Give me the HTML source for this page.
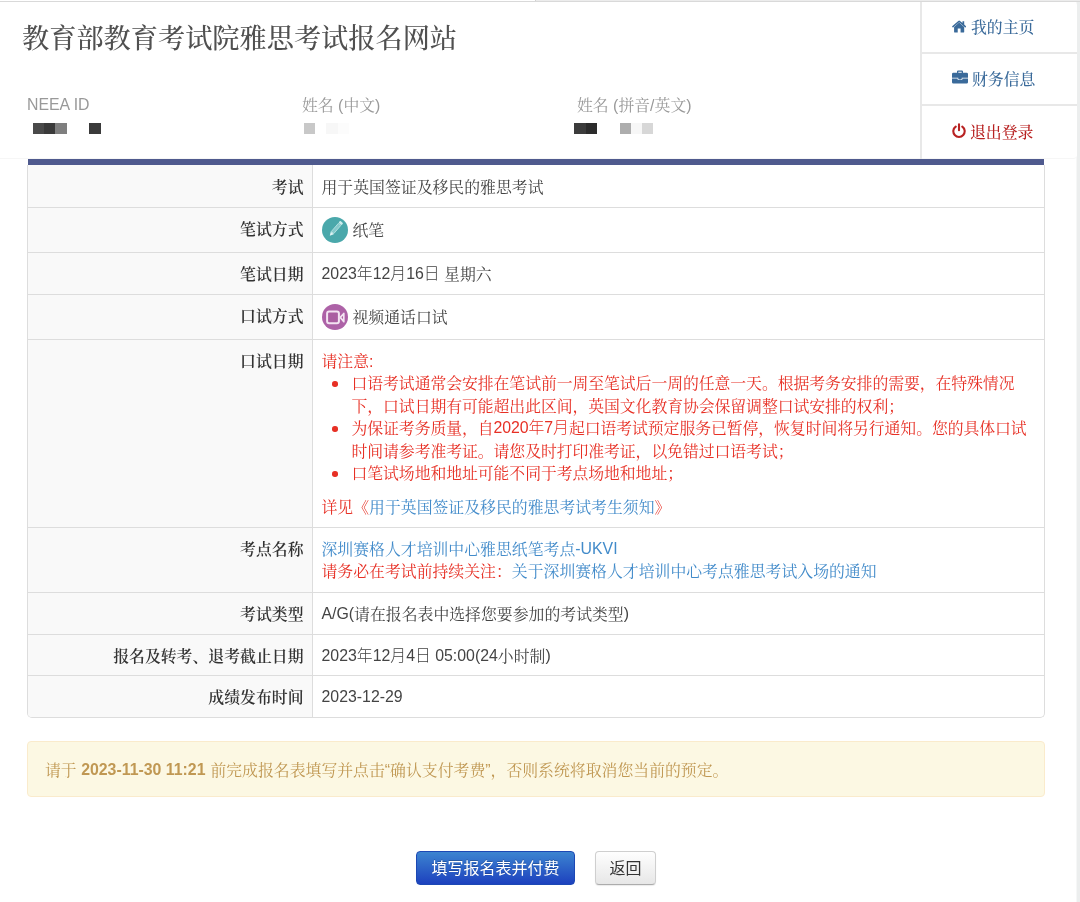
<!DOCTYPE html>
<html lang="zh-CN">
<head>
<meta charset="utf-8">
<title>教育部教育考试院雅思考试报名网站</title>
<style>
*{box-sizing:border-box;}
html,body{margin:0;padding:0;}
body{width:1080px;height:902px;overflow:hidden;background:#fff;position:relative;
  font-family:"Liberation Sans","Noto Serif CJK SC",serif;font-size:15.86px;line-height:22.5px;color:#333;font-weight:400;}
a{color:#428bca;text-decoration:none;}
.strip{position:absolute;left:1076px;top:0;width:4px;height:902px;background:#eceeee;border-left:1px solid #f6f7f7;}
.top0{position:absolute;left:535px;top:0;width:545px;height:1px;background:#ececec;border-left:1px solid #d2d2d2;}
.topline{position:absolute;left:0;top:1px;width:1080px;height:1px;background:#d9d9d9;}
/* header */
.hdr{position:absolute;left:0;top:2px;width:1077px;height:157px;background:#fff;border-bottom:1px solid #f6f6f6;border-radius:0 4px 4px 0;}
.title{position:absolute;left:22px;top:17px;margin:0;font-size:27.19px;line-height:40px;font-weight:500;color:#505050;white-space:nowrap;}
.fld{position:absolute;top:92px;font-size:15.86px;line-height:22.5px;color:#999;white-space:nowrap;}
.blk{position:absolute;top:121px;height:11.3px;width:11.4px;}
.menu{position:absolute;left:920px;top:0;width:157px;height:157px;border-left:2px solid #e8e8e8;}
.mi{position:absolute;left:-1px;width:156px;height:52px;border-top:2px solid #e8e8e8;color:#3a6a9a;white-space:nowrap;}
.mi svg{position:absolute;}
.mi span{position:absolute;left:51px;top:14px;line-height:22.5px;font-weight:500;}
.mi.red{color:#b82222;}
/* table */
.bar{position:absolute;left:28px;top:159px;width:1016px;height:6px;background:#4f5a8e;}
.tw{position:absolute;left:27px;top:165px;width:1018px;height:553px;border:1px solid #ddd;border-top:none;border-radius:0 0 5px 5px;overflow:hidden;background:#fff;}
table.t{position:absolute;left:0;top:0;width:1016px;border-collapse:collapse;table-layout:fixed;border-style:hidden;}
table.t td{border:1px solid #ddd;padding:11px 9px 7px 9px;vertical-align:top;}
table.t td.l{width:284px;background:#f9f9f9;text-align:right;font-weight:600;color:#333;padding-right:8px;}
table.t td.v{color:#444;}
.ic{display:inline-block;width:26px;height:26px;vertical-align:middle;margin-right:5px;position:relative;top:-2px;}
.red,table.t td.red{color:#e73025;}
ul.n{margin:0 0 11.25px 0;padding:0 0 0 30px;list-style:none;letter-spacing:-0.075px;}
ul.n li{position:relative;}
ul.n li:before{content:"";position:absolute;left:-19.4px;top:8.4px;width:5.6px;height:5.6px;border-radius:50%;background:#e73025;}
p{margin:0;}
.e{position:relative;top:-1px;}
.s{font-family:"Liberation Sans","Noto Sans CJK SC",sans-serif;font-weight:300;font-style:normal;}
.alert{position:absolute;left:27px;top:741px;width:1018px;height:56px;background:#fcf8e3;border:1px solid #faebcc;border-radius:4px;color:#c09853;padding:18px 17px 0 17px;white-space:nowrap;}
.alert b{position:relative;top:-1px;margin-right:0.5px;}
.btn{position:absolute;top:851px;height:34px;border-radius:4px;font-family:"Liberation Sans","Noto Sans CJK SC",sans-serif;font-size:16px;line-height:34px;text-align:center;white-space:nowrap;}
.bp{left:416px;width:159px;background:linear-gradient(#3c84d0,#1d41be);border:1px solid #1c48b4;color:#fff;text-shadow:0 -1px 0 rgba(0,0,0,.2);}
.bd{left:595px;width:61px;background:linear-gradient(#fefefe,#e7e7e7);border:1px solid #cfcfcf;border-bottom-color:#acacac;box-shadow:0 1px 1px rgba(0,0,0,.08);color:#333;}
</style>
</head>
<body>
<div id="w" style="position:absolute;left:0;top:0;width:1080px;height:902px;will-change:transform">
<div class="strip"></div>
<div class="top0"></div>
<div class="topline"></div>
<div class="hdr">
  <h1 class="title">教育部教育考试院雅思考试报名网站</h1>
  <div class="fld" style="left:27px">NEEA ID</div>
  <div class="fld" style="left:302px;top:93px">姓名 (中文)</div>
  <div class="fld" style="left:577px;top:93px">姓名 (拼音/英文)</div>
  <div class="blk" style="left:32.800px;background:#4a4a4a"></div>
  <div class="blk" style="left:44.100px;background:#3a3a3a"></div>
  <div class="blk" style="left:55.400px;background:#7f7f7f"></div>
  <div class="blk" style="left:89.200px;background:#3a3a3a"></div>
  <div class="blk" style="left:303.700px;background:#c8c8c8"></div>
  <div class="blk" style="left:326.200px;background:#f7f7f7"></div>
  <div class="blk" style="left:337.500px;background:#fcfcfc"></div>
  <div class="blk" style="left:574.200px;background:#3c3c3c"></div>
  <div class="blk" style="left:585.500px;background:#2c2c2c"></div>
  <div class="blk" style="left:619.500px;background:#adadad"></div>
  <div class="blk" style="left:630.800px;background:#f7f7f7"></div>
  <div class="blk" style="left:642.100px;background:#d7d7d7"></div>
  <div class="menu">
    <div class="mi" style="top:-1px;border-top:none;height:52px">
      <svg style="left:31px;top:19px" width="14.300" height="13" viewBox="0 0 15 13" preserveAspectRatio="none"><path fill="#3a6a9a" d="M7.5 2.6 L2.2 7 V12 a.4.4 0 0 0 .4.4 H6 V8.6 H9 V12.4 H12.4 a.4.4 0 0 0 .4-.4 V7 Z"/><path fill="#3a6a9a" d="M14.8 6.3 L12.8 4.6 V1.2 H11 V3.1 L8.4.9 a1.4 1.4 0 0 0-1.8 0 L.2 6.3 a.3.3 0 0 0 0 .4 l.6.7 a.3.3 0 0 0 .4 0 L7.5 2.2 l6.3 5.2 a.3.3 0 0 0 .4 0 l.6-.7 a.3.3 0 0 0 0-.4Z"/></svg>
      <span style="top:16px;left:50px">我的主页</span>
    </div>
    <div class="mi" style="top:50px;height:52px">
      <svg style="left:31px;top:16px" width="16" height="14" viewBox="0 0 16 15" preserveAspectRatio="none"><path fill="#3a6a9a" fill-rule="evenodd" d="M5 3 V1.600 A1.100 1.100 0 0 1 6.100 .5 H9.900 A1.100 1.100 0 0 1 11 1.600 V3 H14.600 A1.400 1.400 0 0 1 16 4.400 V8.400 H9.700 V9.600 a.5.5 0 0 1-.5.5 H6.800 a.5.5 0 0 1-.5-.5 V8.400 H0 V4.400 A1.400 1.400 0 0 1 1.400 3 Z M6.300 3 H9.700 V1.800 H6.300 Z"/><path fill="#3a6a9a" d="M0 9.200 H5.600 V10 a.8.8 0 0 0 .8.800 H9.600 a.8.8 0 0 0 .8-.800 V9.200 H16 V13.100 A1.400 1.400 0 0 1 14.600 14.500 H1.400 A1.400 1.400 0 0 1 0 13.100 Z"/></svg>
      <span style="top:15px">财务信息</span>
    </div>
    <div class="mi red" style="top:102px;height:54px">
      <svg style="left:31px;top:17px" width="14" height="16" viewBox="0 0 14 16"><path fill="none" stroke="#b82222" stroke-width="2.1" stroke-linecap="round" d="M7 1.300 V7.300 M3.700 3.600 A5.700 5.700 0 1 0 10.300 3.600"/></svg>
      <span style="left:49px;top:16px">退出登录</span>
    </div>
  </div>
</div>
<div class="bar"></div>
<div class="tw"><table class="t">
  <tr style="height:42px"><td class="l" style="padding-top:12px">考试</td><td class="v" style="padding-top:12px">用于英国签证及移民的雅思考试</td></tr>
  <tr style="height:45px"><td class="l">笔试方式</td><td class="v"><svg class="ic" viewBox="0 0 26 26"><circle cx="13" cy="13" r="13" fill="#4aa8ab"/><g transform="translate(13.700 11.900) rotate(41)"><rect x="-2" y="-9.200" width="4" height="2.600" rx=".9" fill="#cdecec"/><rect x="-1.600" y="-6" width="3.200" height="10.800" fill="#86cacc" stroke="#b9e3e3" stroke-width=".8"/><path d="M-2 5.200 H2 L0 9 Z" fill="#dff3f3"/></g></svg>纸笔</td></tr>
  <tr style="height:42px"><td class="l">笔试日期</td><td class="v"><span class="e">2023<i class="s">年</i>12<i class="s">月</i>16<i class="s">日</i></span> 星期六</td></tr>
  <tr style="height:45px"><td class="l">口试方式</td><td class="v"><svg class="ic" viewBox="0 0 26 26"><circle cx="13" cy="13" r="13" fill="#ad62a7"/><rect x="5.100" y="7.500" width="11.800" height="11.800" rx="2" fill="#aa5ea1" stroke="#f3e4f2" stroke-width="2"/><path d="M18.300 13.400 L21.800 9.500 V17.700 Z" fill="#aa5ea1" stroke="#f3e4f2" stroke-width="1.700" stroke-linejoin="round"/></svg>视频通话口试</td></tr>
  <tr style="height:188px"><td class="l">口试日期</td><td class="v red">请注意:
    <ul class="n">
      <li>口语考试通常会安排在笔试前一周至笔试后一周的任意一天。根据考务安排的需要，在特殊情况<br>下，口试日期有可能超出此区间，英国文化教育协会保留调整口试安排的权利；</li>
      <li>为保证考务质量，自<span class="e">2020<i class="s">年</i>7<i class="s">月</i></span>起口语考试预定服务已暂停，恢复时间将另行通知。您的具体口试<br>时间请参考准考证。请您及时打印准考证，以免错过口语考试；</li>
      <li>口笔试场地和地址可能不同于考点场地和地址；</li>
    </ul>
    <p>详见《<a>用于英国签证及移民的雅思考试考生须知</a>》</p></td></tr>
  <tr style="height:65px"><td class="l">考点名称</td><td class="v"><a>深圳赛格人才培训中心雅思纸笔考点<span class="e">-UKVI</span></a><br><span class="red">请务必在考试前持续关注：</span><a>关于深圳赛格人才培训中心考点雅思考试入场的通知</a></td></tr>
  <tr style="height:42px"><td class="l">考试类型</td><td class="v"><span class="e">A/G(</span>请在报名表中选择您要参加的考试类型<span class="e">)</span></td></tr>
  <tr style="height:41px"><td class="l">报名及转考、退考截止日期</td><td class="v"><span class="e">2023<i class="s">年</i>12<i class="s">月</i>4<i class="s">日</i> 05:00(24</span>小时制<span class="e">)</span></td></tr>
  <tr style="height:42px"><td class="l">成绩发布时间</td><td class="v"><span class="e">2023-12-29</span></td></tr>
</table></div>
<div class="alert">请于 <b>2023-11-30 11:21</b> 前完成报名表填写并点击“确认支付考费”，否则系统将取消您当前的预定。</div>
<div class="btn bp">填写报名表并付费</div>
<div class="btn bd">返回</div>
</div>
</body>
</html>
